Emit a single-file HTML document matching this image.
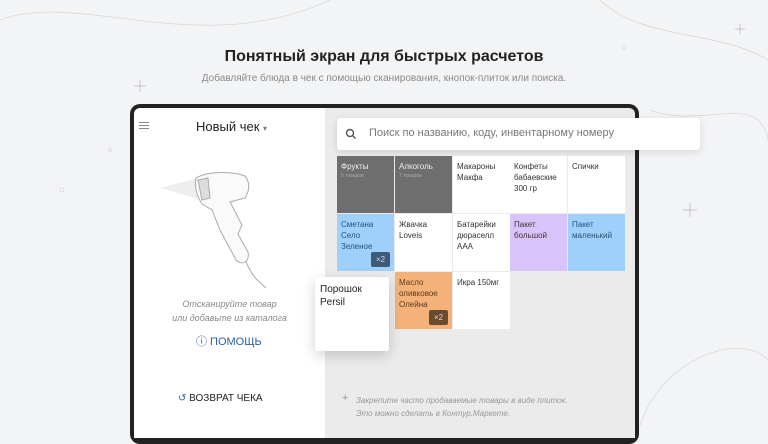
<!DOCTYPE html><html><head><meta charset="utf-8"><style>
*{margin:0;padding:0;box-sizing:border-box}
body{width:768px;height:426px;overflow:hidden;background:#f3f4f6;font-family:"Liberation Sans","DejaVu Sans",sans-serif;position:relative}
.a{position:absolute}
h1{position:absolute;top:48px;width:768px;text-align:center;font-size:16px;font-weight:bold;color:#222}
.sub{top:73px;width:768px;text-align:center;font-size:10px;color:#8a8a8a}
.frame{left:130px;top:104px;width:509px;height:340px;background:#222;border-radius:10px}
.left{left:134px;top:108px;width:191px;height:330px;background:#fff;border-radius:6px 0 0 0}
.right{left:325px;top:108px;width:310px;height:330px;background:#ebebeb;border-radius:0 6px 0 0}
.search{left:337px;top:118px;width:363px;height:32px;background:#fff;border-radius:3px;box-shadow:0 2px 8px rgba(0,0,0,.12);font-size:11px;color:#777;padding:9px 0 0 32px}
.t{position:absolute;width:57px;height:57px;font-size:8px;line-height:11px;padding:5px 4px;color:#333;background:#fff}
.g{background:#6e6e6e;color:#eee}.g i{display:block;font-style:normal;font-size:5px;color:#aaa;line-height:8px}
.b{background:#9fd0fb;color:#28527a}.p{background:#d9c3fb;color:#433}.o{background:#f4b27a;color:#5b3a1d}
.x{position:absolute;right:4px;bottom:4px;width:19px;height:15px;border-radius:2px;font-size:8px;color:#ddd;text-align:center;line-height:15px}
</style></head><body>
<svg class="a" style="left:0;top:0" width="768" height="426" fill="none" stroke="#d8d8d8" stroke-width="0.8">
<path d="M0 20 C80 -10 200 60 330 0"/><path d="M600 0 C640 40 720 30 768 60"/><path d="M640 426 C660 360 740 330 768 360"/><path d="M650 110 C700 130 760 90 768 140"/>
<path d="M140 80 v12 M134 86 h12 M690 203 v14 M683 210 h14 M740 24 v10 M735 29 h10" stroke="#bbb"/>
<circle cx="624" cy="47" r="2"/><circle cx="62" cy="190" r="2"/><circle cx="110" cy="150" r="1.5"/></svg>
<h1>Понятный экран для быстрых расчетов</h1>
<div class="a sub">Добавляйте блюда в чек с помощью сканирования, кнопок-плиток или поиска.</div>
<div class="a frame"></div>
<div class="a left"></div>
<div class="a right"></div>
<div class="a" style="left:139px;top:122px;width:10px;height:1px;background:#888;box-shadow:0 3px #888,0 6px #888"></div>
<div class="a" style="left:196px;top:119px;font-size:13px;color:#222">Новый чек <span style="font-size:8px;color:#777">▾</span></div>
<svg class="a" style="left:150px;top:170px" width="150" height="120" fill="#fafafa" stroke="#aaa" stroke-width="1">
<path d="M10 18 L48 8 L52 30 Z" fill="#eee" stroke="none"/>
<path d="M46 8 C60 0 85 2 95 6 C100 12 100 20 95 28 L80 32 L92 55 L88 64 L98 82 C100 92 92 96 86 90 L70 60 L62 40 L52 34 C48 28 44 18 46 8 Z"/>
<path d="M48 10 L58 8 L60 28 L52 30 Z" fill="#ddd"/>
<path d="M96 92 C104 110 110 112 116 118" fill="none"/></svg>
<div class="a" style="left:134px;top:297px;width:191px;text-align:center;font-size:9px;line-height:14px;color:#888;font-style:italic">Отсканируйте товар<br>или добавьте из каталога</div>
<div class="a" style="left:196px;top:333px;font-size:11px;color:#2b5fa8">ⓘ ПОМОЩЬ</div>
<div class="a" style="left:178px;top:393px;font-size:10px;color:#222"><span style="color:#2b5fa8">↺</span> ВОЗВРАТ ЧЕКА</div>
<div class="a search">Поиск по названию, коду, инвентарному номеру</div>
<svg class="a" style="left:345px;top:128px" width="12" height="12" fill="none" stroke="#555" stroke-width="1.4"><circle cx="5" cy="5" r="3.5"/><path d="M7.5 7.5 L10.5 10.5"/></svg>
<div class="t g" style="left:337px;top:156px">Фрукты<i>5 товаров</i></div>
<div class="t g" style="left:395px;top:156px">Алкоголь<i>7 товаров</i></div>
<div class="t" style="left:453px;top:156px">Макароны Макфа</div>
<div class="t" style="left:510px;top:156px">Конфеты бабаевские 300 гр</div>
<div class="t" style="left:568px;top:156px">Спички</div>
<div class="t b" style="left:337px;top:214px">Сметана Село Зеленое<div class="x" style="background:#3d5a78">×2</div></div>
<div class="t" style="left:395px;top:214px">Жвачка Loveis</div>
<div class="t" style="left:453px;top:214px">Батарейки дюраселл AAA</div>
<div class="t p" style="left:510px;top:214px">Пакет большой</div>
<div class="t b" style="left:568px;top:214px">Пакет маленький</div>
<div class="t o" style="left:395px;top:272px">Масло оливковое Олейна<div class="x" style="background:#6b4a2e">×2</div></div>
<div class="t" style="left:453px;top:272px">Икра 150мг</div>
<div class="a" style="left:315px;top:277px;width:74px;height:74px;background:#fff;border-radius:2px;box-shadow:0 4px 14px rgba(0,0,0,.18);font-size:10px;line-height:13px;padding:6px 5px;color:#222">Порошок Persil</div>
<div class="a" style="left:342px;top:394px;font-size:8px;line-height:13px;color:#999;font-style:italic"><span style="font-style:normal;font-size:11px;position:absolute;left:0;top:-2px">+</span><div style="margin-left:14px">Закрепите часто продаваемые товары в виде плиток.<br>Это можно сделать в Контур.Маркете.</div></div>
</body></html>
